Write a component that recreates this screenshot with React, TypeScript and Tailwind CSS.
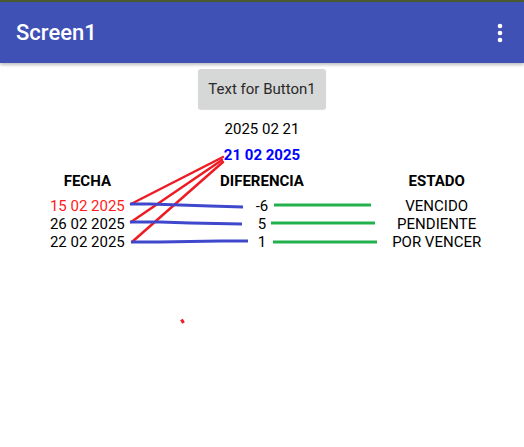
const rows = [
    { fecha: "15 02 2025", dif: "-6", estado: "VENCIDO", red: true },
    { fecha: "26 02 2025", dif: "5", estado: "PENDIENTE", red: false },
    { fecha: "22 02 2025", dif: "1", estado: "POR VENCER", red: false },
]

export default function App() {
    return (
        <div className="relative w-full h-[447px] bg-white overflow-hidden" style={{ fontFamily: "Roboto, 'Liberation Sans', sans-serif" }}>
            {/* status strip */}
            <div className="h-[2px] bg-[#4b5b2e]" />

            {/* toolbar */}
            <div className="h-[61px] bg-[#3f51b5] flex items-center justify-between pl-4 pr-[21px] shadow-[0_2px_3px_rgba(0,0,0,0.25)]">
                <span className="text-white text-[22px] font-medium">Screen1</span>
                <svg width="6" height="20" viewBox="0 0 6 20" fill="white">
                    <circle cx="3" cy="3" r="2.3" />
                    <circle cx="3" cy="10" r="2.3" />
                    <circle cx="3" cy="17" r="2.3" />
                </svg>
            </div>

            <div className="flex flex-col items-center">
                <button className="mt-[6px] w-[128px] h-[40px] bg-[#d6d7d7] rounded-[3px] text-[15px] text-[#2a2a2a] shadow-[0_1px_1px_rgba(0,0,0,0.15)]">
                    Text for Button1
                </button>
                <p className="mt-[11px] text-[15px] leading-[18px] text-black">2025 02 21</p>
                <p className="mt-[8px] text-[15px] leading-[18px] font-bold text-[#0000ff]">21 02 2025</p>
            </div>

            {/* table */}
            <div className="mt-[8px] grid grid-cols-3 text-[15px] leading-[18px] text-center text-black">
                <p className="font-bold">FECHA</p>
                <p className="font-bold">DIFERENCIA</p>
                <p className="font-bold">ESTADO</p>
            </div>
            <div className="mt-[7px] grid grid-cols-3 text-[15px] leading-[18px] text-center text-black">
                {rows.map((r) => (
                    <div key={r.fecha} className="contents">
                        <p className={r.red ? "text-[#ff1a1a]" : ""}>{r.fecha}</p>
                        <p>{r.dif}</p>
                        <p>{r.estado}</p>
                    </div>
                ))}
            </div>

            {/* canvas drawing */}
            <svg className="absolute inset-0 pointer-events-none" width="524" height="447" viewBox="0 0 524 447">
                <g stroke="#ed1c24" strokeWidth="2.5" strokeLinecap="round" fill="none">
                    <line x1="223" y1="157" x2="131" y2="204" />
                    <line x1="222" y1="160" x2="131" y2="222" />
                    <line x1="223" y1="162" x2="132" y2="242" />
                </g>
                <g stroke="#3f48cc" strokeWidth="3" fill="none">
                    <polyline points="130,204 150,204 180,205 210,206 243,207" />
                    <polyline points="130,222 160,222 190,223 242,224" />
                    <polyline points="131,242 160,242 190,241.5 220,241 248,241" />
                </g>
                <g stroke="#22b14c" strokeWidth="3" fill="none">
                    <line x1="274" y1="205" x2="371" y2="205" />
                    <line x1="271" y1="223" x2="375" y2="223" />
                    <line x1="273" y1="242" x2="377" y2="242" />
                </g>
                <line x1="181.5" y1="319.5" x2="183.5" y2="323" stroke="#ed1c24" strokeWidth="3" />
            </svg>
        </div>
    )
}
